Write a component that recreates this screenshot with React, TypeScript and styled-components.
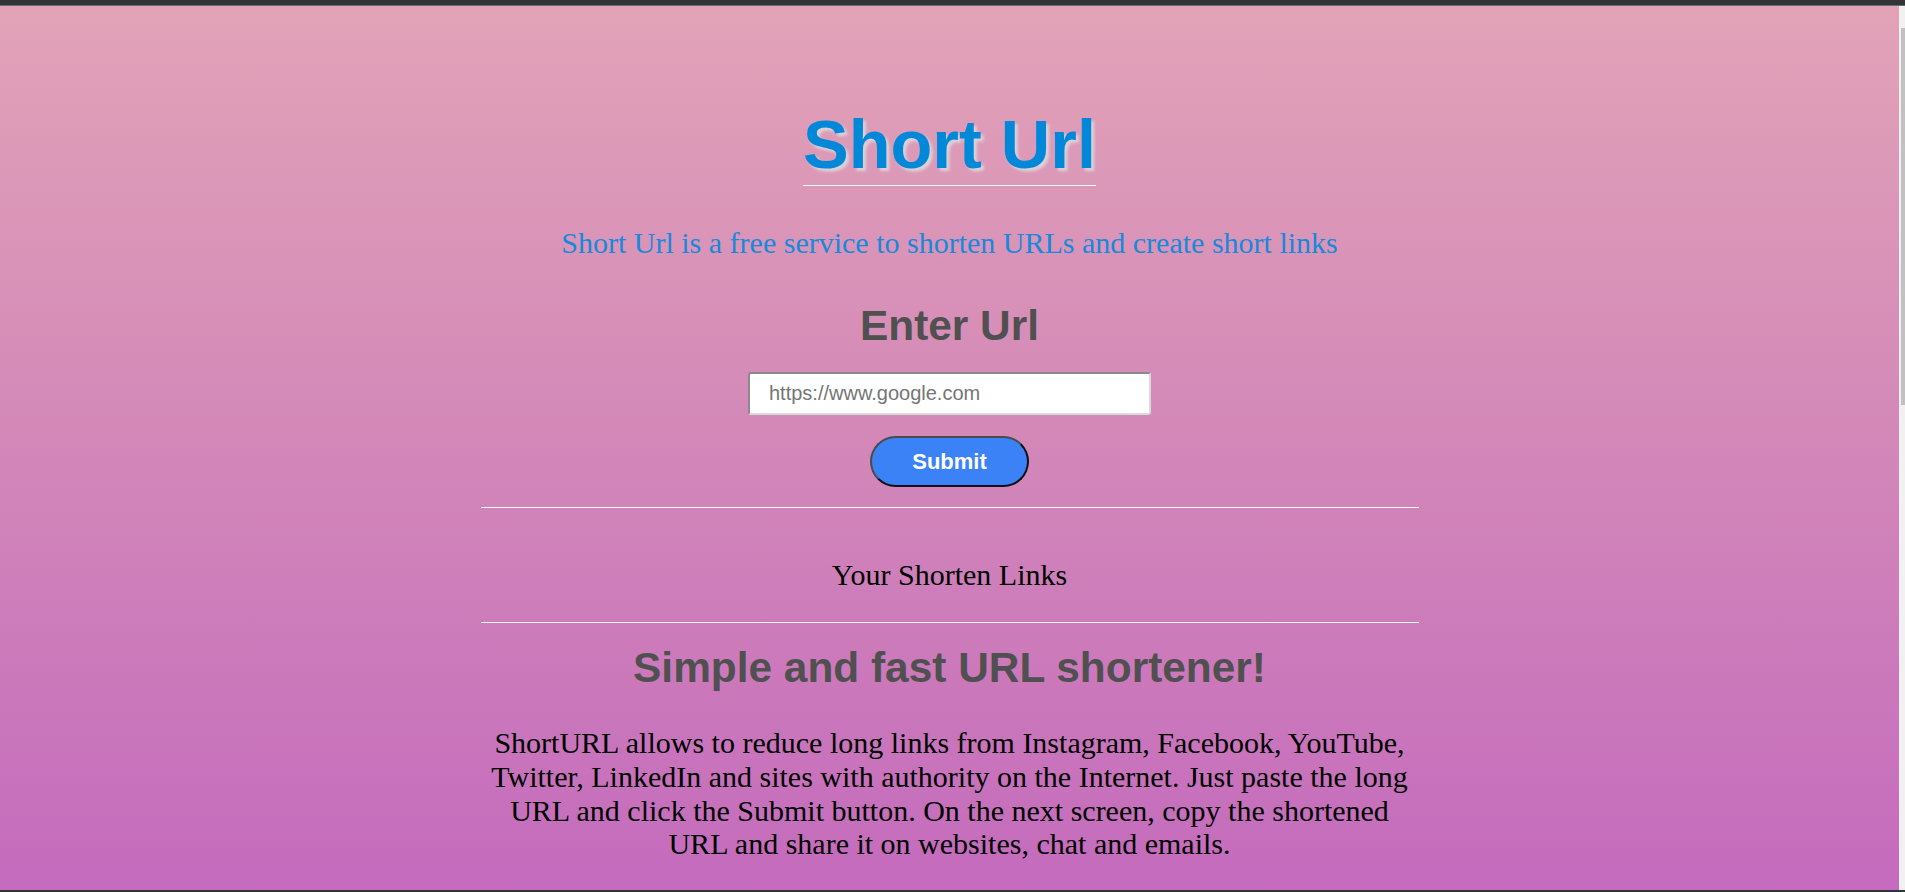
import React from "react";
import styled, { createGlobalStyle } from "styled-components";

const GlobalStyle = createGlobalStyle`
  html, body {
    margin: 0;
    padding: 0;
    height: 100%;
    overflow: hidden;
  }
  #root {
    height: 100%;
  }
  * {
    box-sizing: border-box;
  }
`;

const SANS = `"Liberation Sans", Arial, Helvetica, sans-serif`;
const SERIF = `"Liberation Serif", "Times New Roman", Times, serif`;

const Frame = styled.div`
  display: flex;
  flex-direction: column;
  height: 100vh;
  width: 100%;
`;

const WindowBar = styled.div<{ $h: number; $line?: boolean }>`
  flex-shrink: 0;
  height: ${(p) => p.$h}px;
  background: #333438;
  border-bottom: ${(p) => (p.$line ? "1px solid #6c6c6e" : "none")};
`;

const Viewport = styled.div`
  flex: 1;
  min-height: 0;
  display: flex;
`;

const Page = styled.main`
  flex: 1;
  min-width: 0;
  overflow: hidden;
  background: linear-gradient(to bottom, #e2a3b7 0%, #d48ab8 45%, #c46bbd 100%);
`;

const ScrollTrack = styled.div`
  width: 6px;
  flex-shrink: 0;
  background: #f1f1f1;
  padding-top: 22px;
  padding-left: 2px;
`;

const ScrollThumb = styled.div`
  width: 4px;
  height: 377px;
  background: #c1c1c1;
`;

const Content = styled.div`
  width: 938px;
  margin: 0 auto;
  padding-top: 99px;
  display: flex;
  flex-direction: column;
  align-items: center;
  text-align: center;
`;

const Title = styled.h1`
  margin: 0;
  padding-bottom: 0.5px;
  font-family: ${SANS};
  font-size: 68.5px;
  font-weight: 700;
  line-height: normal;
  color: #0288d9;
  text-shadow: 3px 3px 3px rgba(218, 214, 218, 0.95);
  border-bottom: 1px solid #ffffff;
`;

const Tagline = styled.p`
  margin: 40px 0 0;
  font-family: ${SERIF};
  font-size: 30px;
  line-height: normal;
  color: #1689dd;
`;

const Heading = styled.h2<{ $gap: number }>`
  margin: ${(p) => p.$gap}px 0 0;
  font-family: ${SANS};
  font-size: 42.4px;
  font-weight: 700;
  line-height: normal;
  color: #505050;
`;

const UrlInput = styled.input`
  margin-top: 22px;
  width: 403px;
  height: 43px;
  padding: 0 18px 0 19px;
  border-width: 2px;
  border-style: solid;
  border-color: #8a8a8a #dadada #dadada #8a8a8a;
  border-radius: 3px;
  background: #ffffff;
  font-family: ${SANS};
  font-size: 20px;
  color: #222;
  outline: none;

  &::placeholder {
    color: #757575;
  }
`;

const SubmitButton = styled.button`
  margin-top: 21px;
  width: 159px;
  height: 51px;
  border-radius: 26px;
  border-width: 2px;
  border-style: solid;
  border-color: #4a4a4a #111111 #111111 #4a4a4a;
  background: #3b82f6;
  color: #ffffff;
  font-family: ${SANS};
  font-size: 22px;
  font-weight: 700;
  cursor: pointer;
  padding: 0;
`;

const Divider = styled.hr<{ $gap: number }>`
  align-self: stretch;
  margin: ${(p) => p.$gap}px 0 0;
  border: 0;
  border-top: 1px solid #ffffff;
  height: 0;
`;

const LinksLabel = styled.p`
  margin: 50px 0 0;
  font-family: ${SERIF};
  font-size: 30px;
  line-height: 34px;
  color: #000000;
`;

const Description = styled.p`
  margin: 34px 0 0;
  padding: 0 4px;
  font-family: ${SERIF};
  font-size: 30px;
  line-height: 33.8px;
  color: #000000;
`;

export default function App() {
  return (
    <>
      <GlobalStyle />
      <Frame>
        <WindowBar $h={6} $line />
        <Viewport>
          <Page>
            <Content>
              <Title>Short Url</Title>
              <Tagline>
                Short Url is a free service to shorten URLs and create short links
              </Tagline>
              <Heading $gap={42.5}>Enter Url</Heading>
              <UrlInput type="text" placeholder="https://www.google.com" />
              <SubmitButton type="button">Submit</SubmitButton>
              <Divider $gap={20} />
              <LinksLabel>Your Shorten Links</LinksLabel>
              <Divider $gap={30} />
              <Heading $gap={21}>Simple and fast URL shortener!</Heading>
              <Description>
                ShortURL allows to reduce long links from Instagram, Facebook,
                YouTube, Twitter, LinkedIn and sites with authority on the
                Internet. Just paste the long URL and click the Submit button. On
                the next screen, copy the shortened URL and share it on websites,
                chat and emails.
              </Description>
            </Content>
          </Page>
          <ScrollTrack>
            <ScrollThumb />
          </ScrollTrack>
        </Viewport>
        <WindowBar $h={2} />
      </Frame>
    </>
  );
}
